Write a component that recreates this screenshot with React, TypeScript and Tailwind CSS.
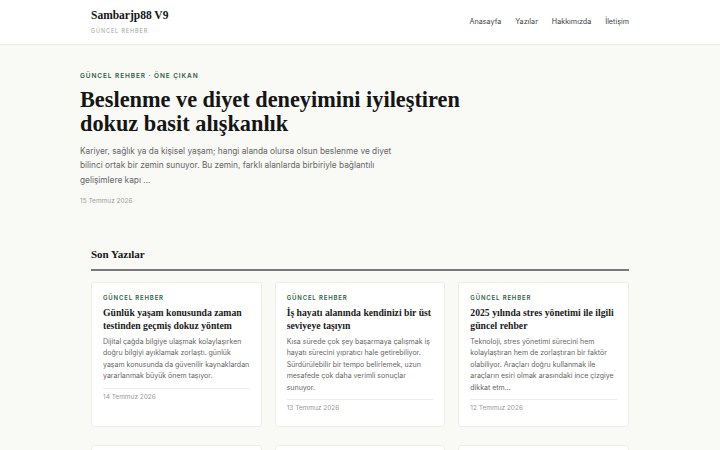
import React from 'react';

const serif = { fontFamily: '"Liberation Serif", "DejaVu Serif", serif' };

const posts = [
  {
    title: 'Günlük yaşam konusunda zaman testinden geçmiş dokuz yöntem',
    excerpt:
      'Dijital çağda bilgiye ulaşmak kolaylaşırken doğru bilgiyi ayıklamak zorlaştı. günlük yaşam konusunda da güvenilir kaynaklardan yararlanmak büyük önem taşıyor.',
    date: '14 Temmuz 2026',
  },
  {
    title: 'İş hayatı alanında kendinizi bir üst seviyeye taşıyın',
    excerpt:
      'Kısa sürede çok şey başarmaya çalışmak iş hayatı sürecini yıpratıcı hale getirebiliyor. Sürdürülebilir bir tempo belirlemek, uzun mesafede çok daha verimli sonuçlar sunuyor.',
    date: '13 Temmuz 2026',
  },
  {
    title: '2025 yılında stres yönetimi ile ilgili güncel rehber',
    excerpt:
      'Teknoloji, stres yönetimi sürecini hem kolaylaştıran hem de zorlaştıran bir faktör olabiliyor. Araçları doğru kullanmak ile araçların esiri olmak arasındaki ince çizgiye dikkat etm...',
    date: '12 Temmuz 2026',
  },
  { title: 'Sağlıklı uyku düzeni için küçük adımlar', excerpt: 'Uyku kalitesi gün içindeki enerjiyi doğrudan etkiliyor.', date: '11 Temmuz 2026' },
  { title: 'Kişisel finans planlamasında ilk adımlar', excerpt: 'Bütçe yapmak düzenli bir alışkanlıkla başlıyor.', date: '10 Temmuz 2026' },
  { title: 'Evde verimli çalışma alanı kurmak', excerpt: 'Doğru düzen odaklanmayı kolaylaştırıyor.', date: '9 Temmuz 2026' },
];

function PostCard({ title, excerpt, date }: (typeof posts)[number]) {
  return (
    <article className="flex flex-col rounded-[3px] border border-[#eeeee9] bg-white px-[11px] pt-[11px] pb-[13px]">
      <span className="text-[6px] font-semibold uppercase leading-[8px] tracking-[0.14em] text-[#2f5e48]">
        Güncel Rehber
      </span>
      <h3 style={serif} className="mt-[4px] text-[9.7px] font-bold leading-[13px] text-[#1a1a1a]">
        {title}
      </h3>
      <p className="mt-[4px] text-[7px] leading-[11.6px] text-[#666]">{excerpt}</p>
      <div className="mt-[6px] border-t border-[#ececec] pt-[4px] text-[6.5px] leading-[9px] text-[#999]">{date}</div>
    </article>
  );
}

export default function App() {
  return (
    <div className="min-h-screen bg-[#f9f9f6] text-[#222]" style={{ fontFamily: 'Inter, "Liberation Sans", sans-serif' }}>
      <header className="border-b border-[#efefea] bg-white">
        <div className="mx-auto flex h-[44px] max-w-[560px] items-center justify-between px-[11px]">
          <div className="flex flex-col">
            <span style={serif} className="text-[11.5px] font-bold leading-[15px] text-[#151515]">
              Sambarjp88 V9
            </span>
            <span className="mt-[4px] text-[5.5px] uppercase tracking-[0.16em] text-[#a0a0a0]">Güncel Rehber</span>
          </div>
          <nav className="flex gap-[14px] text-[7.2px] text-[#444]">
            <a>Anasayfa</a>
            <a>Yazılar</a>
            <a>Hakkımızda</a>
            <a>İletişim</a>
          </nav>
        </div>
      </header>

      <main className="mx-auto max-w-[560px]">
        <section className="pt-[27px]">
          <div className="text-[6.5px] font-semibold uppercase tracking-[0.14em] text-[#2f5e48]">
            Güncel Rehber · Öne Çıkan
          </div>
          <h1 style={serif} className="mt-[6px] max-w-[420px] text-[22.3px] font-bold leading-[24px] text-[#151515]">
            Beslenme ve diyet deneyimini iyileştiren dokuz basit alışkanlık
          </h1>
          <p className="mt-[8px] max-w-[312px] text-[8.3px] leading-[14.5px] text-[#666]">
            Kariyer, sağlık ya da kişisel yaşam; hangi alanda olursa olsun beslenme ve diyet bilinci ortak bir zemin
            sunuyor. Bu zemin, farklı alanlarda birbiriyle bağlantılı gelişimlere kapı ...
          </p>
          <div className="mt-[10px] text-[6.5px] text-[#a0a0a0]">15 Temmuz 2026</div>
        </section>

        <section className="mt-[39px] px-[11px]">
          <h2 style={serif} className="text-[11px] font-bold text-[#151515]">
            Son Yazılar
          </h2>
          <div className="mt-[6px] h-[2px] bg-[#7a7a7a]" />
          <div className="mt-[11px] grid grid-cols-3 gap-x-[13px] gap-y-[18px]">
            {posts.map((p) => (
              <PostCard key={p.title} {...p} />
            ))}
          </div>
        </section>
      </main>
    </div>
  );
}
